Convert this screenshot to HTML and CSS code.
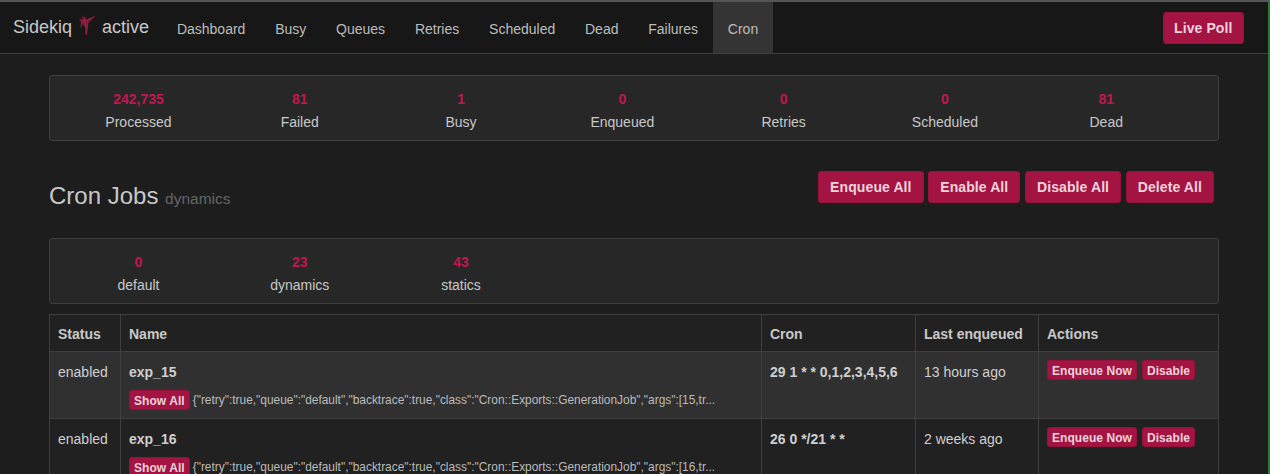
FILE: index.html
```html
<!DOCTYPE html>
<html lang="en">
<head>
<meta charset="utf-8">
<title>Sidekiq Cron</title>
<link rel="stylesheet" href="styles.css">
</head>
<body>
<header class="navbar">
  <div class="brand"><span>Sidekiq</span>
    <svg class="logo" width="18" height="22" viewBox="0 0 18 22"><path d="M4 0.500l1.500 3 1.500-1 1 3L18 1.500 10.500 8.500 10 13l-1 8H7.500L7 13 4.500 9.500 3.500 14l-1-.5L3 8 1 5l1-.5 2 2 .5-1.500z" fill="#8a1c3e"/></svg>
    <span>active</span></div>
  <nav class="nav">
    <a>Dashboard</a><a>Busy</a><a>Queues</a><a>Retries</a><a>Scheduled</a><a>Dead</a><a>Failures</a><a class="current">Cron</a>
  </nav>
  <button class="btn live">Live Poll</button>
</header>
<main class="container">
  <section class="stats">
    <div class="stat"><b>242,735</b><span>Processed</span></div>
    <div class="stat"><b>81</b><span>Failed</span></div>
    <div class="stat"><b>1</b><span>Busy</span></div>
    <div class="stat"><b>0</b><span>Enqueued</span></div>
    <div class="stat"><b>0</b><span>Retries</span></div>
    <div class="stat"><b>0</b><span>Scheduled</span></div>
    <div class="stat"><b>81</b><span>Dead</span></div>
  </section>
  <section class="head">
    <h3>Cron Jobs <small>dynamics</small></h3>
    <div class="head-actions">
      <button class="btn">Enqueue All</button>
      <button class="btn">Enable All</button>
      <button class="btn">Disable All</button>
      <button class="btn">Delete All</button>
    </div>
  </section>
  <section class="stats">
    <div class="stat"><b>0</b><span>default</span></div>
    <div class="stat"><b>23</b><span>dynamics</span></div>
    <div class="stat"><b>43</b><span>statics</span></div>
  </section>
  <table class="jobs">
    <thead>
      <tr><th class="c1">Status</th><th class="c2">Name</th><th class="c3">Cron</th><th class="c4">Last enqueued</th><th>Actions</th></tr>
    </thead>
    <tbody>
      <tr class="odd">
        <td class="txt">enabled</td>
        <td><b class="job">exp_15</b><div class="args"><button class="btn mini">Show All</button><span>{"retry":true,"queue":"default","backtrace":true,"class":"Cron::Exports::GenerationJob","args":[15,tr...</span></div></td>
        <td class="txt"><b>29 1 * * 0,1,2,3,4,5,6</b></td>
        <td class="txt">13 hours ago</td>
        <td><div class="row-actions"><button class="btn mini">Enqueue Now</button><button class="btn mini">Disable</button></div></td>
      </tr>
      <tr>
        <td class="txt">enabled</td>
        <td><b class="job">exp_16</b><div class="args"><button class="btn mini">Show All</button><span>{"retry":true,"queue":"default","backtrace":true,"class":"Cron::Exports::GenerationJob","args":[16,tr...</span></div></td>
        <td class="txt"><b>26 0 */21 * *</b></td>
        <td class="txt">2 weeks ago</td>
        <td><div class="row-actions"><button class="btn mini">Enqueue Now</button><button class="btn mini">Disable</button></div></td>
      </tr>
    </tbody>
  </table>
</main>
</body>
</html>
```
FILE: styles.css
```css
* { box-sizing: border-box; }
body {
  margin: 0;
  height: 474px;
  overflow: hidden;
  background: #1d1d1d;
  color: #cfcfcf;
  font: 14px/20px "Liberation Sans", Arial, sans-serif;
  border-top: 2px solid #555;
  border-right: 2px solid #2b7a35;
}
.navbar {
  display: flex;
  align-items: center;
  height: 52px;
  background: #171717;
  border-bottom: 1px solid #3d3d3d;
  padding: 0 24px 0 13px;
}
.brand { display: flex; align-items: center; gap: 6px; font-size: 18px; line-height: 20px; color: #c8c8c8; width: 149px; padding-bottom: 2px; }
.logo { margin-bottom: 4px; }
.nav { display: flex; flex: 1; align-self: stretch; }
.nav a { display: block; padding: 17px 14.900px 0; height: 51px; color: #bdbdbd; }
.nav a.current { background: #343434; }
.btn {
  font: 700 14px/20px "Liberation Sans", Arial, sans-serif;
  color: #eed3dc;
  background: #a31442;
  border: 1px solid #96123a;
  border-radius: 3px;
  padding: 5px 11px;
  height: 32px;
  letter-spacing: 0.1px;
}
.btn.live { padding: 5px 10.500px; }
.container { padding: 21px 49px 0; width: 1268px; }
.stats {
  display: grid;
  grid-template-columns: repeat(7, 161.3px);
  height: 66px;
  padding: 0 0 0 7.800px;
  background: #272727;
  border: 1px solid #3f3f3f;
  border-radius: 3px;
  width: 1170px;
}
.stat { display: flex; flex-direction: column; align-items: center; padding-top: 13px; }
.stat b { font-size: 14px; line-height: 20px; color: #c0174f; }
.stat span { line-height: 20px; margin-top: 3px; color: #c8c8c8; }
.head { display: flex; justify-content: space-between; height: 97px; width: 1170px; padding: 30px 5px 0 0; }
h3 { margin: 10px 0 0; font-size: 24px; line-height: 30px; font-weight: 400; color: #c8c8c8; }
h3 small { font-size: 15.500px; color: #666; }
.head-actions { display: flex; gap: 4.600px; }
.jobs { margin-top: 10px; width: 1170px; border-collapse: collapse; table-layout: fixed; background: #212121; }
.jobs th, .jobs td { border: 1px solid #3f3f3f; padding: 8px; text-align: left; vertical-align: top; line-height: 20px; }
.jobs th { color: #c8c8c8; padding: 9px 8px 7px; }
.jobs td.txt { padding-top: 10px; }
.c1 { width: 71px; }
.c2 { width: 641px; }
.c3 { width: 154px; }
.c4 { width: 123px; }
.odd td { background: #303030; }
.job { display: block; margin-top: 2px; }
.args { display: flex; align-items: center; gap: 3px; font-size: 11.920px; margin-top: 8px; color: #bbb; white-space: nowrap; line-height: 20px; height: 20px; }
.row-actions { display: flex; gap: 5px; }
.btn.mini { font-size: 12px; line-height: 16px; height: 20px; padding: 2px 4px 0; letter-spacing: 0.06px; }
```
